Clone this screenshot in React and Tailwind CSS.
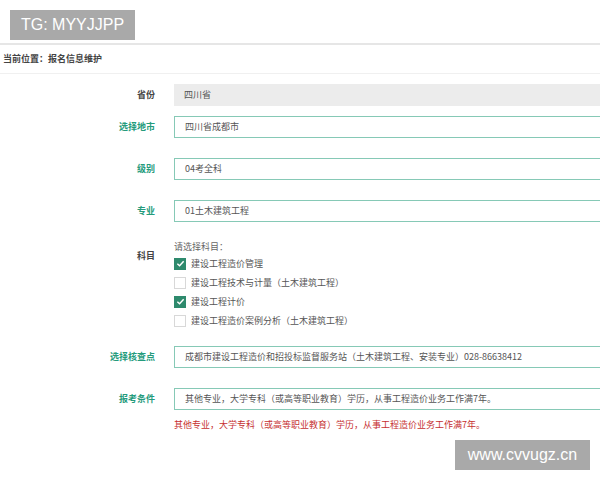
import React from 'react';

const font = { fontFamily: '"Noto Sans CJK SC", "Noto Sans", sans-serif' };

const Row = ({ label, required, children, className = '' }) => (
    <div className={`flex items-center ${className}`}>
        <div className={`w-[155px] shrink-0 text-right text-[9px] font-bold ${required ? 'text-[#259b7c]' : 'text-[#444]'}`}>
            {label}
        </div>
        <div className="ml-[19px] w-[440px] shrink-0">{children}</div>
    </div>
);

const Field = ({ value, gray }) => (
    <div
        className={`h-[22px] flex items-center pl-[10px] text-[9px] text-[#555] ${
            gray ? 'bg-[#ececec]' : 'border border-[#86c9b6] bg-white'
        }`}
    >
        {value}
    </div>
);

const Check = ({ checked, label }) => (
    <div className="flex items-center h-[19px]">
        <div
            className={`w-[12px] h-[12px] flex items-center justify-center ${
                checked ? 'bg-[#2e8a6d]' : 'border border-[#d8d8d8] bg-white'
            }`}
        >
            {checked && (
                <svg width="9" height="9" viewBox="0 0 10 10">
                    <path d="M1.5 5.2 L4 7.5 L8.5 2.5" stroke="white" strokeWidth="1.6" fill="none" />
                </svg>
            )}
        </div>
        <span className="ml-[5px] text-[9px] text-[#555]">{label}</span>
    </div>
);

export default function App() {
    return (
        <div className="w-[600px] h-[480px] overflow-hidden bg-white relative" style={font}>
            {/* watermark top */}
            <div className="absolute left-[10px] top-[10px] w-[125px] h-[30px] bg-[#a9a9a9] flex items-center justify-center text-white text-[16px]" style={{ fontFamily: '"Liberation Sans", Arial, sans-serif' }}>
                TG: MYYJJPP
            </div>

            <div className="h-[43px]" />
            <div className="h-[2px] bg-[#e6e6e6]" />
            <div className="h-[29px] flex items-center pl-[3px] text-[9px] font-bold text-[#444] border-b border-[#f0f0f0]">
                当前位置：报名信息维护
            </div>

            <div className="pt-[10px]">
                <Row label="省份">
                    <Field value="四川省" gray />
                </Row>
                <Row label="选择地市" required className="mt-[10px]">
                    <Field value="四川省成都市" />
                </Row>
                <Row label="级别" required className="mt-[20px]">
                    <Field value="04考全科" />
                </Row>
                <Row label="专业" required className="mt-[20px]">
                    <Field value="01土木建筑工程" />
                </Row>

                <div className="flex mt-[18px]">
                    <div className="w-[155px] shrink-0 text-right text-[9px] font-bold text-[#444] pt-[9px]">科目</div>
                    <div className="ml-[19px]">
                        <div className="text-[9px] text-[#666] h-[14px] leading-[14px]">请选择科目：</div>
                        <Check checked label="建设工程造价管理" />
                        <Check label="建设工程技术与计量（土木建筑工程）" />
                        <Check checked label="建设工程计价" />
                        <Check label="建设工程造价案例分析（土木建筑工程）" />
                    </div>
                </div>

                <Row label="选择核查点" required className="mt-[16px]">
                    <Field value="成都市建设工程造价和招投标监督服务站（土木建筑工程、安装专业）028-86638412" />
                </Row>
                <Row label="报考条件" required className="mt-[20px]">
                    <Field value="其他专业，大学专科（或高等职业教育）学历，从事工程造价业务工作满7年。" />
                </Row>
                <div className="ml-[174px] mt-[8px] text-[9px] text-[#c62f2f]">
                    其他专业，大学专科（或高等职业教育）学历，从事工程造价业务工作满7年。
                </div>
            </div>

            {/* watermark bottom */}
            <div className="absolute left-[455px] top-[440px] w-[135px] h-[30px] bg-[#a9a9a9] flex items-center justify-center text-white text-[16px]" style={{ fontFamily: '"Liberation Sans", Arial, sans-serif' }}>
                www.cvvugz.cn
            </div>
        </div>
    );
}
